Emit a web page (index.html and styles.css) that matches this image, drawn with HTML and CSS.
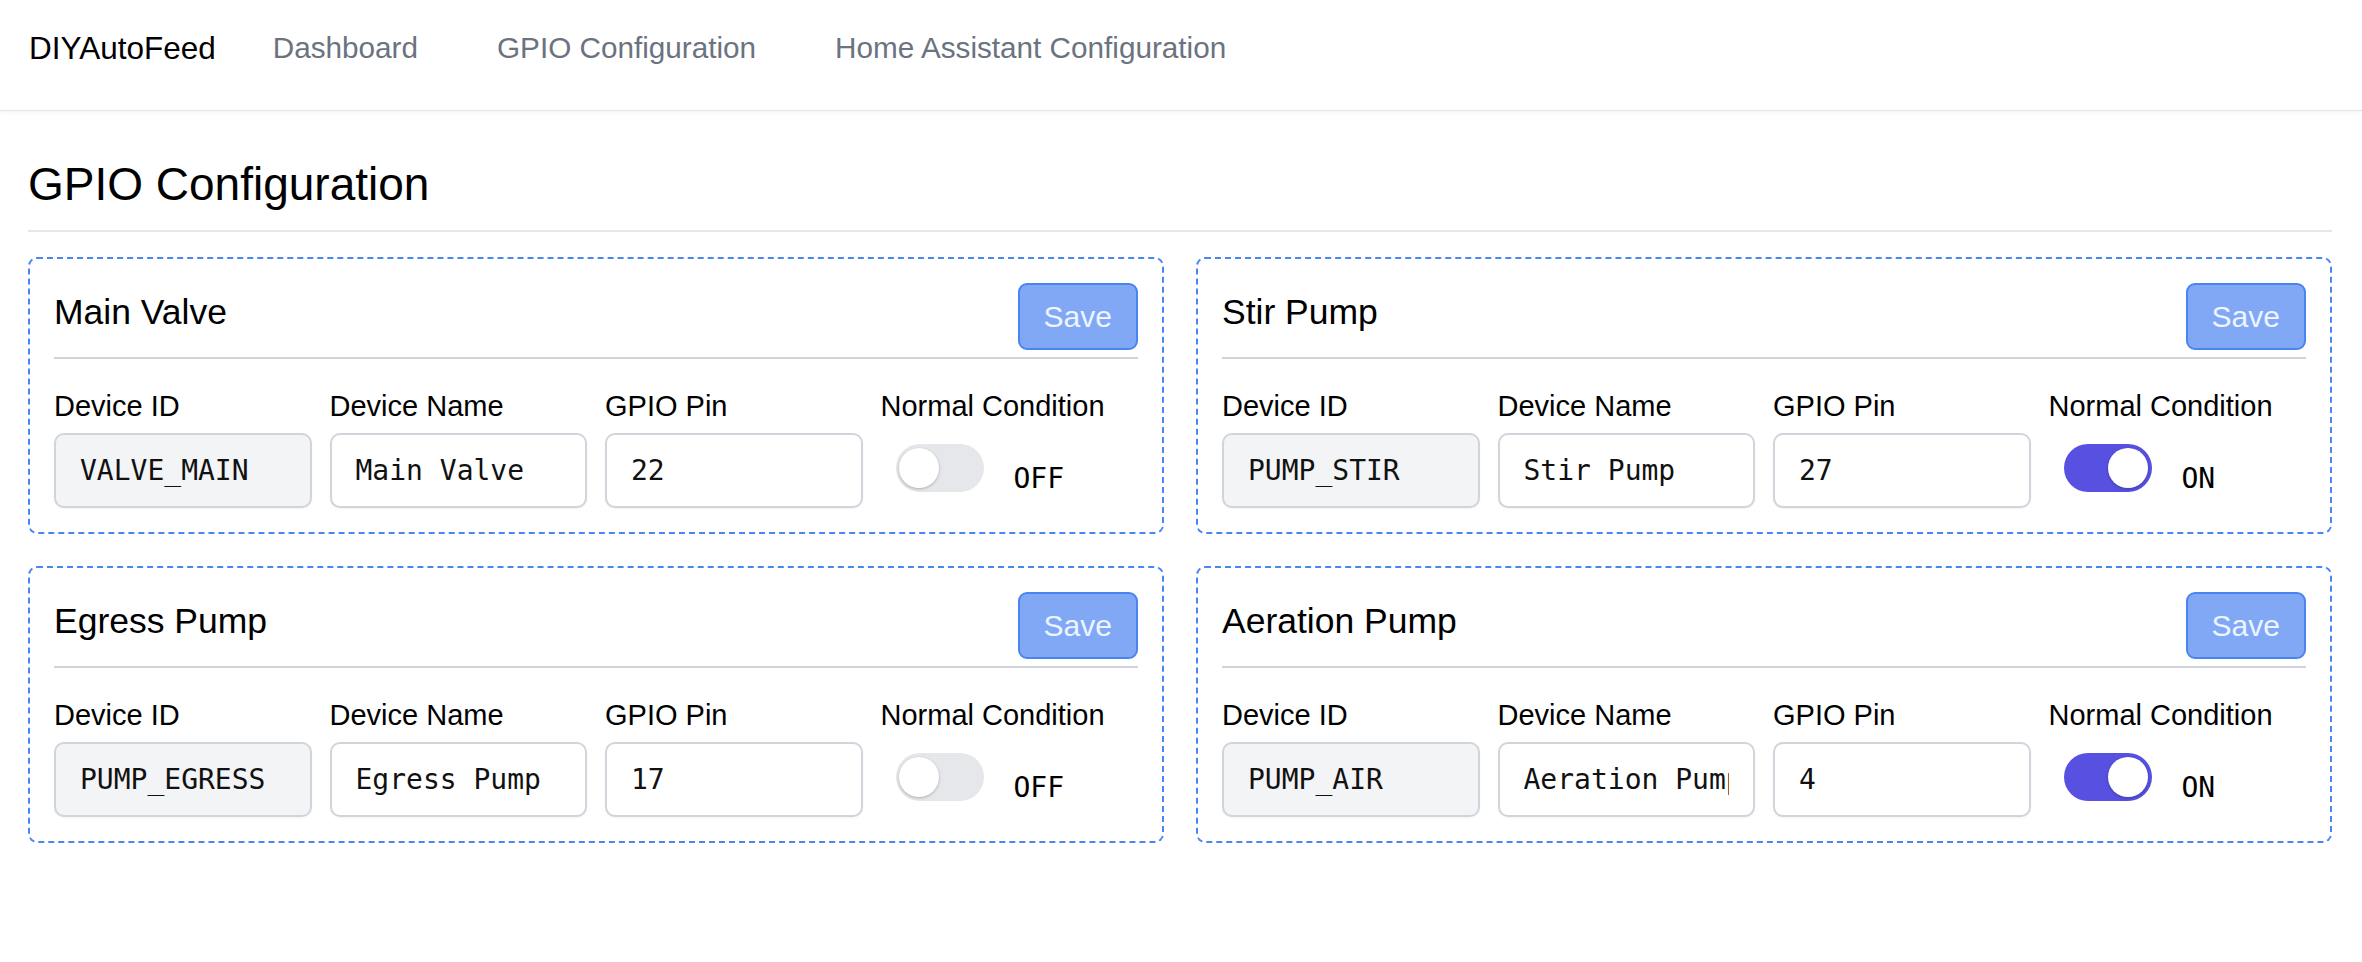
FILE: index.html
```html
<!DOCTYPE html>
<html lang="en">
<head>
<meta charset="utf-8">
<title>DIYAutoFeed - GPIO Configuration</title>
<link rel="stylesheet" href="styles.css">
</head>
<body>
<nav class="navbar">
  <a class="brand" href="#">DIYAutoFeed</a>
  <div class="nav-links">
    <a class="nav-link" href="#">Dashboard</a>
    <a class="nav-link" href="#">GPIO Configuration</a>
    <a class="nav-link" href="#">Home Assistant Configuration</a>
  </div>
</nav>
<main class="page">
  <h1 class="page-title">GPIO Configuration</h1>
  <div class="card-grid">
    <section class="card">
      <div class="card-header">
        <h2 class="card-title">Main Valve</h2>
        <button class="save-btn" type="button">Save</button>
      </div>
      <div class="fields">
        <div class="field"><label class="field-label">Device ID</label><input class="input input-readonly" value="VALVE_MAIN" readonly></div>
        <div class="field"><label class="field-label">Device Name</label><input class="input" value="Main Valve"></div>
        <div class="field"><label class="field-label">GPIO Pin</label><input class="input" value="22"></div>
        <div class="field"><label class="field-label">Normal Condition</label>
          <div class="condition"><span class="toggle"><span class="knob"></span></span><span class="state">OFF</span></div>
        </div>
      </div>
    </section>
    <section class="card">
      <div class="card-header">
        <h2 class="card-title">Stir Pump</h2>
        <button class="save-btn" type="button">Save</button>
      </div>
      <div class="fields">
        <div class="field"><label class="field-label">Device ID</label><input class="input input-readonly" value="PUMP_STIR" readonly></div>
        <div class="field"><label class="field-label">Device Name</label><input class="input" value="Stir Pump"></div>
        <div class="field"><label class="field-label">GPIO Pin</label><input class="input" value="27"></div>
        <div class="field"><label class="field-label">Normal Condition</label>
          <div class="condition"><span class="toggle toggle-on"><span class="knob"></span></span><span class="state">ON</span></div>
        </div>
      </div>
    </section>
    <section class="card">
      <div class="card-header">
        <h2 class="card-title">Egress Pump</h2>
        <button class="save-btn" type="button">Save</button>
      </div>
      <div class="fields">
        <div class="field"><label class="field-label">Device ID</label><input class="input input-readonly" value="PUMP_EGRESS" readonly></div>
        <div class="field"><label class="field-label">Device Name</label><input class="input" value="Egress Pump"></div>
        <div class="field"><label class="field-label">GPIO Pin</label><input class="input" value="17"></div>
        <div class="field"><label class="field-label">Normal Condition</label>
          <div class="condition"><span class="toggle"><span class="knob"></span></span><span class="state">OFF</span></div>
        </div>
      </div>
    </section>
    <section class="card">
      <div class="card-header">
        <h2 class="card-title">Aeration Pump</h2>
        <button class="save-btn" type="button">Save</button>
      </div>
      <div class="fields">
        <div class="field"><label class="field-label">Device ID</label><input class="input input-readonly" value="PUMP_AIR" readonly></div>
        <div class="field"><label class="field-label">Device Name</label><input class="input" value="Aeration Pump"></div>
        <div class="field"><label class="field-label">GPIO Pin</label><input class="input" value="4"></div>
        <div class="field"><label class="field-label">Normal Condition</label>
          <div class="condition"><span class="toggle toggle-on"><span class="knob"></span></span><span class="state">ON</span></div>
        </div>
      </div>
    </section>
  </div>
</main>
</body>
</html>
```

FILE: styles.css
```css
body {
  margin: 0;
  background: #ffffff;
  color: #000000;
  font-family: "Liberation Sans", Arial, sans-serif;
}

.navbar {
  height: 110px;
  box-sizing: border-box;
  padding: 0 29px 14px 29px;
  display: flex;
  align-items: center;
  background: #ffffff;
  box-shadow: 0 1px 0 #e3e4e7, 0 2px 5px rgba(0, 0, 0, 0.06);
}

.brand {
  font-size: 31.5px;
  line-height: 42px;
  color: #000000;
  text-decoration: none;
  margin-right: 57px;
}

.nav-links {
  display: flex;
  gap: 79px;
}

.nav-link {
  font-size: 29.7px;
  line-height: 42px;
  color: #6b7280;
  text-decoration: none;
}

.page {
  padding: 47px 30px 0 28px;
}

.page-title {
  margin: 0;
  font-size: 46px;
  line-height: 54px;
  font-weight: 400;
  padding-bottom: 19px;
  border-bottom: 2px solid #e5e7eb;
}

.card-grid {
  display: grid;
  grid-template-columns: 1fr 1fr;
  gap: 32px;
  margin-top: 25px;
}

.card {
  border: 2px dashed #4a86f3;
  border-radius: 9px;
  padding: 24px;
}

.card-header {
  display: flex;
  justify-content: space-between;
  align-items: center;
  padding-bottom: 7px;
  border-bottom: 2px solid #d1d5db;
}

.card-title {
  margin: 0 0 10px 0;
  font-size: 35.5px;
  line-height: 42px;
  font-weight: 400;
}

.save-btn {
  font-family: "Liberation Sans", Arial, sans-serif;
  font-size: 30px;
  line-height: 42px;
  color: #eef4ff;
  background: #80a8f5;
  border: 2px solid #4a84f0;
  border-radius: 9px;
  padding: 10.5px 24px;
}

.fields {
  display: grid;
  grid-template-columns: repeat(4, 1fr);
  column-gap: 18px;
  margin-top: 26px;
}

.field-label {
  display: block;
  font-size: 29px;
  line-height: 42px;
  margin-bottom: 6px;
}

.input {
  display: block;
  width: 100%;
  box-sizing: border-box;
  height: 75px;
  margin: 0;
  padding: 0 24px;
  font-family: "DejaVu Sans Mono", monospace;
  font-size: 28px;
  line-height: 42px;
  color: #111111;
  background: #ffffff;
  border: 2px solid #d1d5db;
  border-radius: 10px;
  box-shadow: 0 1px 2px rgba(0, 0, 0, 0.05);
  outline: none;
}

.input-readonly {
  background: #f3f4f6;
}

.condition {
  display: flex;
  align-items: center;
  height: 75px;
}

.toggle {
  position: relative;
  flex: none;
  width: 88px;
  height: 48px;
  border-radius: 24px;
  background: #e5e7eb;
  margin-left: 15px;
  margin-bottom: 6px;
}

.knob {
  position: absolute;
  top: 4px;
  left: 3px;
  width: 40px;
  height: 40px;
  border-radius: 50%;
  background: #ffffff;
  box-shadow: 0 1px 3px rgba(0, 0, 0, 0.25);
}

.toggle-on {
  background: #5750e1;
}

.toggle-on .knob {
  left: 44px;
}

.state {
  font-family: "DejaVu Sans Mono", monospace;
  font-size: 28px;
  line-height: 42px;
  margin-left: 30px;
  margin-top: 16px;
  color: #000000;
}
```
